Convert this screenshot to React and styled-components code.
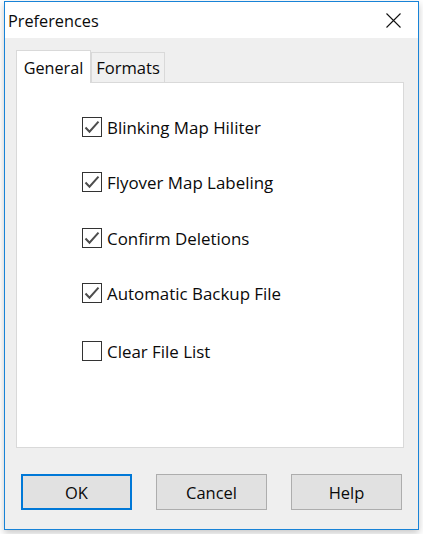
import React from "react";
import styled, { createGlobalStyle } from "styled-components";

const Global = createGlobalStyle`
  html, body { margin: 0; padding: 0; background: #fff; }
  body { width: 423px; height: 534px; overflow: hidden; font-family: "Open Sans", "Noto Sans", sans-serif; color: #0a0a0a; }
`;
const Page = styled.div`
  padding: 1px 4px 0;
`;
const Dialog = styled.div`
  box-sizing: border-box;
  width: 415px;
  height: 529px;
  border: 1px solid #1883d7;
  background: #efefef;
  box-shadow: 0 3px 7px rgba(0,0,0,.22);
  display: flex;
  flex-direction: column;
`;
const TitleBar = styled.div`
  height: 36px;
  flex: none;
  background: #fff;
  display: flex;
  align-items: center;
  justify-content: space-between;
  padding: 0 17px 0 3px;
`;
const Title = styled.span`
  font-size: 16.300px;
  padding-top: 1px;
`;
const CloseIcon = styled.svg`
  width: 15px;
  height: 15px;
  display: block;
`;
const Body = styled.div`
  flex: 1;
  display: flex;
  flex-direction: column;
  padding: 12px 14px 0 11px;
`;
const TabStrip = styled.div`
  display: flex;
  align-items: flex-end;
  height: 33px;
  position: relative;
  z-index: 1;
  margin-bottom: -1px;
`;
const Tab = styled.div`
  box-sizing: border-box;
  border: 1px solid #d9d9d9;
  border-bottom: ${p => (p.$active ? "none" : "1px solid #d9d9d9")};
  background: ${p => (p.$active ? "#fff" : "#f0f0f0")};
  height: ${p => (p.$active ? "33px" : "31px")};
  width: ${p => (p.$active ? "75px" : "74px")};
  font-size: ${p => (p.$active ? "16.200px" : "16.600px")};
  padding-top: ${p => (p.$active ? "1px" : "0")};
  display: flex;
  align-items: center;
  justify-content: center;
`;
const Panel = styled.div`
  box-sizing: border-box;
  width: 388px;
  height: 366px;
  background: #fff;
  border: 1px solid #d9d9d9;
  padding: 33px 0 0 65px;
  display: flex;
  flex-direction: column;
`;
const Row = styled.label`
  display: flex;
  align-items: center;
  gap: 5px;
  height: 22px;
  margin-bottom: ${p => p.$after}px;
  font-size: 16.900px;
`;
const Box = styled.span`
  box-sizing: border-box;
  width: 20px;
  height: 20px;
  border: 1px solid #333;
  background: #fff;
  display: flex;
  align-items: center;
  justify-content: center;
  flex: none;
`;
const Check = styled.svg`
  width: 18px;
  height: 18px;
  display: block;
`;
const Footer = styled.div`
  display: flex;
  gap: 24px;
  padding: 26px 0 0 5px;
`;
const Button = styled.button`
  box-sizing: border-box;
  width: 111px;
  height: 36px;
  background: #e1e1e1;
  border: ${p => (p.$primary ? "2px solid #0078d7" : "1px solid #adadad")};
  font: inherit;
  font-size: 16.500px;
  color: #0a0a0a;
  padding: 0;
`;

const options = [
  { label: "Blinking Map Hiliter", checked: true, after: 33 },
  { label: "Flyover Map Labeling", checked: true, after: 34 },
  { label: "Confirm Deletions", checked: true, after: 33 },
  { label: "Automatic Backup File", checked: true, after: 36 },
  { label: "Clear File List", checked: false, after: 0 },
];

export default function App() {
  return (
    <Page>
      <Global />
      <Dialog>
        <TitleBar>
          <Title>Preferences</Title>
          <CloseIcon viewBox="0 0 15 15">
            <path d="M.5.5l14 14M14.500.5l-14 14" stroke="#111" strokeWidth="1.100" fill="none" />
          </CloseIcon>
        </TitleBar>
        <Body>
          <TabStrip>
            <Tab $active>General</Tab>
            <Tab>Formats</Tab>
          </TabStrip>
          <Panel>
            {options.map(o => (
              <Row key={o.label} $after={o.after}>
                <Box>
                  {o.checked && (
                    <Check viewBox="0 0 18 18">
                      <path d="M2.500 9.500l4 4.200 9-10" stroke="#4d4d4d" strokeWidth="2" fill="none" />
                    </Check>
                  )}
                </Box>
                {o.label}
              </Row>
            ))}
          </Panel>
          <Footer>
            <Button $primary>OK</Button>
            <Button>Cancel</Button>
            <Button>Help</Button>
          </Footer>
        </Body>
      </Dialog>
    </Page>
  );
}
